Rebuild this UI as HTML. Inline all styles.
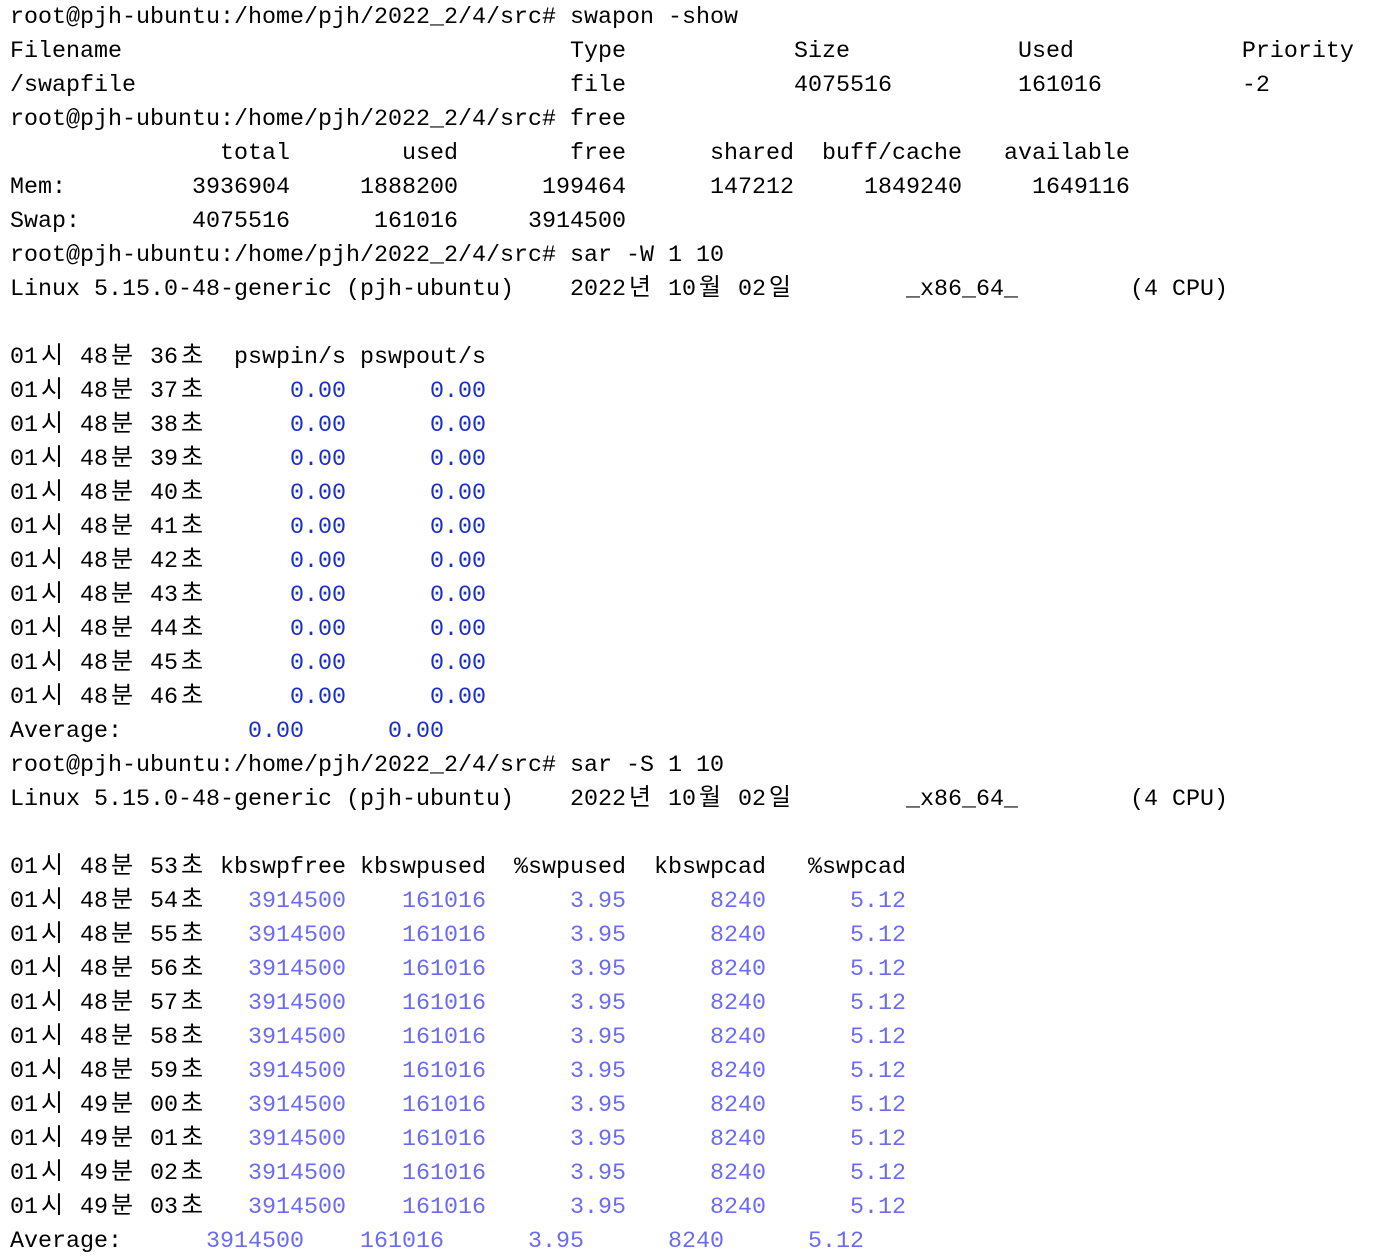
<!DOCTYPE html>
<html><head><meta charset="utf-8"><style>
html,body{margin:0;padding:0;background:#fff;width:1388px;height:1256px;overflow:hidden}
pre{margin:0;position:absolute;left:10px;top:1px;font-family:"Liberation Mono","Noto Sans CJK KR",monospace;font-size:23.33px;line-height:34px;color:#000;white-space:pre}
.k{display:inline-block;width:28px;text-align:center;font-family:"Noto Sans CJK KR","NanumGothic",sans-serif;font-size:24px;line-height:1;vertical-align:baseline}
.d{color:#1a2ec8}
.l{color:#6b6bf2}
</style></head><body><pre>root@pjh-ubuntu:/home/pjh/2022_2/4/src# swapon -show
Filename                                Type            Size            Used            Priority
/swapfile                               file            4075516         161016          -2
root@pjh-ubuntu:/home/pjh/2022_2/4/src# free
               total        used        free      shared  buff/cache   available
Mem:         3936904     1888200      199464      147212     1849240     1649116
Swap:        4075516      161016     3914500
root@pjh-ubuntu:/home/pjh/2022_2/4/src# sar -W 1 10
Linux 5.15.0-48-generic (pjh-ubuntu)    2022<span class="k">년</span> 10<span class="k">월</span> 02<span class="k">일</span>        _x86_64_        (4 CPU)

01<span class="k">시</span> 48<span class="k">분</span> 36<span class="k">초</span>  pswpin/s pswpout/s
01<span class="k">시</span> 48<span class="k">분</span> 37<span class="k">초</span>      <span class="d">0.00</span>      <span class="d">0.00</span>
01<span class="k">시</span> 48<span class="k">분</span> 38<span class="k">초</span>      <span class="d">0.00</span>      <span class="d">0.00</span>
01<span class="k">시</span> 48<span class="k">분</span> 39<span class="k">초</span>      <span class="d">0.00</span>      <span class="d">0.00</span>
01<span class="k">시</span> 48<span class="k">분</span> 40<span class="k">초</span>      <span class="d">0.00</span>      <span class="d">0.00</span>
01<span class="k">시</span> 48<span class="k">분</span> 41<span class="k">초</span>      <span class="d">0.00</span>      <span class="d">0.00</span>
01<span class="k">시</span> 48<span class="k">분</span> 42<span class="k">초</span>      <span class="d">0.00</span>      <span class="d">0.00</span>
01<span class="k">시</span> 48<span class="k">분</span> 43<span class="k">초</span>      <span class="d">0.00</span>      <span class="d">0.00</span>
01<span class="k">시</span> 48<span class="k">분</span> 44<span class="k">초</span>      <span class="d">0.00</span>      <span class="d">0.00</span>
01<span class="k">시</span> 48<span class="k">분</span> 45<span class="k">초</span>      <span class="d">0.00</span>      <span class="d">0.00</span>
01<span class="k">시</span> 48<span class="k">분</span> 46<span class="k">초</span>      <span class="d">0.00</span>      <span class="d">0.00</span>
Average:         <span class="d">0.00</span>      <span class="d">0.00</span>
root@pjh-ubuntu:/home/pjh/2022_2/4/src# sar -S 1 10
Linux 5.15.0-48-generic (pjh-ubuntu)    2022<span class="k">년</span> 10<span class="k">월</span> 02<span class="k">일</span>        _x86_64_        (4 CPU)

01<span class="k">시</span> 48<span class="k">분</span> 53<span class="k">초</span> kbswpfree kbswpused  %swpused  kbswpcad   %swpcad
01<span class="k">시</span> 48<span class="k">분</span> 54<span class="k">초</span>   <span class="l">3914500</span>    <span class="l">161016</span>      <span class="l">3.95</span>      <span class="l">8240</span>      <span class="l">5.12</span>
01<span class="k">시</span> 48<span class="k">분</span> 55<span class="k">초</span>   <span class="l">3914500</span>    <span class="l">161016</span>      <span class="l">3.95</span>      <span class="l">8240</span>      <span class="l">5.12</span>
01<span class="k">시</span> 48<span class="k">분</span> 56<span class="k">초</span>   <span class="l">3914500</span>    <span class="l">161016</span>      <span class="l">3.95</span>      <span class="l">8240</span>      <span class="l">5.12</span>
01<span class="k">시</span> 48<span class="k">분</span> 57<span class="k">초</span>   <span class="l">3914500</span>    <span class="l">161016</span>      <span class="l">3.95</span>      <span class="l">8240</span>      <span class="l">5.12</span>
01<span class="k">시</span> 48<span class="k">분</span> 58<span class="k">초</span>   <span class="l">3914500</span>    <span class="l">161016</span>      <span class="l">3.95</span>      <span class="l">8240</span>      <span class="l">5.12</span>
01<span class="k">시</span> 48<span class="k">분</span> 59<span class="k">초</span>   <span class="l">3914500</span>    <span class="l">161016</span>      <span class="l">3.95</span>      <span class="l">8240</span>      <span class="l">5.12</span>
01<span class="k">시</span> 49<span class="k">분</span> 00<span class="k">초</span>   <span class="l">3914500</span>    <span class="l">161016</span>      <span class="l">3.95</span>      <span class="l">8240</span>      <span class="l">5.12</span>
01<span class="k">시</span> 49<span class="k">분</span> 01<span class="k">초</span>   <span class="l">3914500</span>    <span class="l">161016</span>      <span class="l">3.95</span>      <span class="l">8240</span>      <span class="l">5.12</span>
01<span class="k">시</span> 49<span class="k">분</span> 02<span class="k">초</span>   <span class="l">3914500</span>    <span class="l">161016</span>      <span class="l">3.95</span>      <span class="l">8240</span>      <span class="l">5.12</span>
01<span class="k">시</span> 49<span class="k">분</span> 03<span class="k">초</span>   <span class="l">3914500</span>    <span class="l">161016</span>      <span class="l">3.95</span>      <span class="l">8240</span>      <span class="l">5.12</span>
Average:      <span class="l">3914500</span>    <span class="l">161016</span>      <span class="l">3.95</span>      <span class="l">8240</span>      <span class="l">5.12</span></pre></body></html>
